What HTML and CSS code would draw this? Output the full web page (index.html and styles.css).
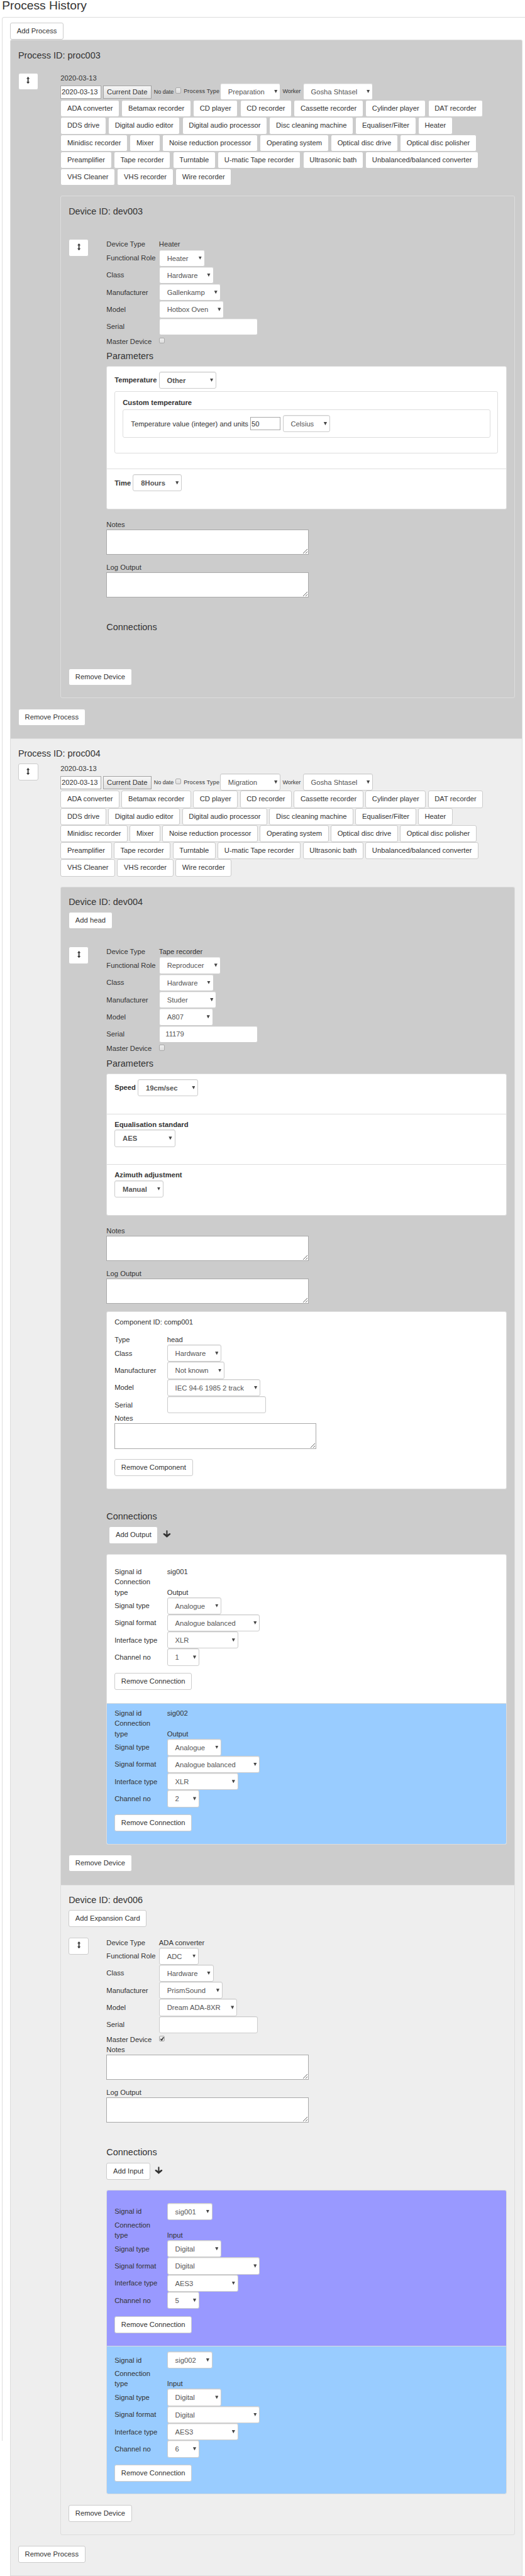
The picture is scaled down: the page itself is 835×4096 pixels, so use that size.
FILE: index.html
```html
<!DOCTYPE html>
<html lang="en">
<head>
<meta charset="utf-8">
<title>Process History</title>
<link rel="stylesheet" href="styles.css">
</head>
<body>
<svg class="defs" aria-hidden="true">
  <symbol id="updown" viewBox="0 0 14 14"><path d="M7 0l3.2 3.9H8.1v6.2h2.1L7 14l-3.2-3.9h2.1V3.9H3.8z"/></symbol>
  <symbol id="down" viewBox="0 0 14 14"><path d="M5.8 1.2Q5.8.2 7 .2t1.2 1v6.9l3.5-2.2q1.4-.5 2 .5.4.9-.3 1.6L7 13.8.6 8q-.7-.7-.3-1.6.6-1 2-.5l3.5 2.2z"/></symbol>
</svg>
<h1 class="title">Process History</h1>
<main class="history">
  <button class="btn">Add Process</button>

  <section class="process dark first">
    <h2 class="heading">Process ID: proc003</h2>
    <div class="process-row">
      <button class="btn move"><svg><use href="#updown"/></svg></button>
      <div class="process-body">
        <p class="text">2020-03-13</p>
        <div class="date-row">
          <input class="date" value="2020-03-13"><button class="native">Current Date</button>
          <small class="no-date">No date</small><i class="check"></i><small class="ptype">Process Type</small>
          <span class="select w120">Preparation</span><small class="worker">Worker</small><span class="select w139">Gosha Shtasel</span>
        </div>
        <div class="types">
          <button class="btn">ADA converter</button><button class="btn">Betamax recorder</button><button class="btn">CD player</button><button class="btn">CD recorder</button><button class="btn">Cassette recorder</button><button class="btn">Cylinder player</button><button class="btn">DAT recorder</button><button class="btn">DDS drive</button><button class="btn">Digital audio editor</button><button class="btn">Digital audio processor</button><button class="btn">Disc cleaning machine</button><button class="btn">Equaliser/Filter</button><button class="btn">Heater</button><button class="btn">Minidisc recorder</button><button class="btn">Mixer</button><button class="btn">Noise reduction processor</button><button class="btn">Operating system</button><button class="btn">Optical disc drive</button><button class="btn">Optical disc polisher</button><button class="btn">Preamplifier</button><button class="btn">Tape recorder</button><button class="btn">Turntable</button><button class="btn">U-matic Tape recorder</button><button class="btn">Ultrasonic bath</button><button class="btn">Unbalanced/balanced converter</button><button class="btn">VHS Cleaner</button><button class="btn">VHS recorder</button><button class="btn">Wire recorder</button>
        </div>
        <section class="device dev003">
          <h2 class="heading">Device ID: dev003</h2>
          <div class="device-row">
            <button class="btn move"><svg><use href="#updown"/></svg></button>
            <div class="device-body">
              <div class="field plain"><label>Device Type</label><span>Heater</span></div>
              <div class="field"><label>Functional Role</label><span class="select w91">Heater</span></div>
              <div class="field"><label>Class</label><span class="select w108">Hardware</span></div>
              <div class="field"><label>Manufacturer</label><span class="select w122">Gallenkamp</span></div>
              <div class="field"><label>Model</label><span class="select w129">Hotbox Oven</span></div>
              <div class="field"><label>Serial</label><input class="serial" value=""></div>
              <div class="field master"><label>Master Device</label><i class="check"></i></div>
              <h2 class="heading">Parameters</h2>
              <div class="list">
                <div class="item temp">
                  <div class="param"><b>Temperature</b><span class="select bold w114">Other</span></div>
                  <div class="custom">
                    <b>Custom temperature</b>
                    <div class="units"><span>Temperature value (integer) and units</span><input class="num" value="50"><span class="select w94">Celsius</span></div>
                  </div>
                </div>
                <div class="item time"><div class="param"><b>Time</b><span class="select bold w97">8Hours</span></div></div>
              </div>
              <div class="area gap-20"><label>Notes</label><textarea></textarea></div>
              <div class="area gap-15"><label>Log Output</label><textarea></textarea></div>
              <h2 class="heading connections">Connections</h2>
            </div>
          </div>
          <button class="btn remove-device">Remove Device</button>
        </section>
      </div>
    </div>
    <button class="btn remove-process">Remove Process</button>
  </section>

  <section class="process light second">
    <h2 class="heading">Process ID: proc004</h2>
    <div class="process-row">
      <button class="btn move"><svg><use href="#updown"/></svg></button>
      <div class="process-body">
        <p class="text">2020-03-13</p>
        <div class="date-row">
          <input class="date" value="2020-03-13"><button class="native">Current Date</button>
          <small class="no-date">No date</small><i class="check"></i><small class="ptype">Process Type</small>
          <span class="select w120">Migration</span><small class="worker">Worker</small><span class="select w139">Gosha Shtasel</span>
        </div>
        <div class="types">
          <button class="btn">ADA converter</button><button class="btn">Betamax recorder</button><button class="btn">CD player</button><button class="btn">CD recorder</button><button class="btn">Cassette recorder</button><button class="btn">Cylinder player</button><button class="btn">DAT recorder</button><button class="btn">DDS drive</button><button class="btn">Digital audio editor</button><button class="btn">Digital audio processor</button><button class="btn">Disc cleaning machine</button><button class="btn">Equaliser/Filter</button><button class="btn">Heater</button><button class="btn">Minidisc recorder</button><button class="btn">Mixer</button><button class="btn">Noise reduction processor</button><button class="btn">Operating system</button><button class="btn">Optical disc drive</button><button class="btn">Optical disc polisher</button><button class="btn">Preamplifier</button><button class="btn">Tape recorder</button><button class="btn">Turntable</button><button class="btn">U-matic Tape recorder</button><button class="btn">Ultrasonic bath</button><button class="btn">Unbalanced/balanced converter</button><button class="btn">VHS Cleaner</button><button class="btn">VHS recorder</button><button class="btn">Wire recorder</button>
        </div>
        <section class="device dark dev004">
          <h2 class="heading">Device ID: dev004</h2>
          <button class="btn add-part">Add head</button>
          <div class="device-row">
            <button class="btn move"><svg><use href="#updown"/></svg></button>
            <div class="device-body">
              <div class="field plain"><label>Device Type</label><span>Tape recorder</span></div>
              <div class="field"><label>Functional Role</label><span class="select w122">Reproducer</span></div>
              <div class="field"><label>Class</label><span class="select w108">Hardware</span></div>
              <div class="field"><label>Manufacturer</label><span class="select w114">Studer</span></div>
              <div class="field"><label>Model</label><span class="select w107">A807</span></div>
              <div class="field"><label>Serial</label><input class="serial" value="11179"></div>
              <div class="field master"><label>Master Device</label><i class="check"></i></div>
              <h2 class="heading">Parameters</h2>
              <div class="list">
                <div class="item speed"><div class="param"><b>Speed</b><span class="select bold w120">19cm/sec</span></div></div>
                <div class="item stacked"><b>Equalisation standard</b><span class="select bold w120">AES</span></div>
                <div class="item stacked"><b>Azimuth adjustment</b><span class="select bold w97">Manual</span></div>
              </div>
              <div class="area gap-20"><label>Notes</label><textarea></textarea></div>
              <div class="area gap-15"><label>Log Output</label><textarea></textarea></div>
              <div class="list component">
                <p class="text">Component ID: comp001</p>
                <div class="field plain type"><label>Type</label><span>head</span></div>
                <div class="field"><label>Class</label><span class="select w108">Hardware</span></div>
                <div class="field"><label>Manufacturer</label><span class="select w114">Not known</span></div>
                <div class="field"><label>Model</label><span class="select w185">IEC 94-6 1985 2 track</span></div>
                <div class="field"><label>Serial</label><input class="serial" value=""></div>
                <div class="area"><label>Notes</label><textarea></textarea></div>
                <button class="btn remove-part">Remove Component</button>
              </div>
              <h2 class="heading connections">Connections</h2>
              <div class="add-row output"><button class="btn">Add Output</button><svg><use href="#down"/></svg></div>
              <div class="list">
                <div class="item connection lead">
                  <div class="field plain"><label>Signal id</label><span>sig001</span></div>
                  <div class="field double"><label>Connection type</label><span>Output</span></div>
                  <div class="field"><label>Signal type</label><span class="select w108">Analogue</span></div>
                  <div class="field"><label>Signal format</label><span class="select w184">Analogue balanced</span></div>
                  <div class="field"><label>Interface type</label><span class="select w141">XLR</span></div>
                  <div class="field"><label>Channel no</label><span class="select w64">1</span></div>
                  <button class="btn">Remove Connection</button>
                </div>
                <div class="item connection blue">
                  <div class="field plain"><label>Signal id</label><span>sig002</span></div>
                  <div class="field double"><label>Connection type</label><span>Output</span></div>
                  <div class="field"><label>Signal type</label><span class="select w108">Analogue</span></div>
                  <div class="field"><label>Signal format</label><span class="select w184">Analogue balanced</span></div>
                  <div class="field"><label>Interface type</label><span class="select w141">XLR</span></div>
                  <div class="field"><label>Channel no</label><span class="select w64">2</span></div>
                  <button class="btn">Remove Connection</button>
                </div>
              </div>
            </div>
          </div>
          <button class="btn remove-device">Remove Device</button>
        </section>
        <section class="device light dev006">
          <h2 class="heading">Device ID: dev006</h2>
          <button class="btn add-part">Add Expansion Card</button>
          <div class="device-row">
            <button class="btn move"><svg><use href="#updown"/></svg></button>
            <div class="device-body">
              <div class="field plain"><label>Device Type</label><span>ADA converter</span></div>
              <div class="field"><label>Functional Role</label><span class="select w79">ADC</span></div>
              <div class="field"><label>Class</label><span class="select w108">Hardware</span></div>
              <div class="field"><label>Manufacturer</label><span class="select w126">PrismSound</span></div>
              <div class="field"><label>Model</label><span class="select w155">Dream ADA-8XR</span></div>
              <div class="field"><label>Serial</label><input class="serial" value=""></div>
              <div class="field master"><label>Master Device</label><i class="check"><svg viewBox="0 0 12 12"><path d="M2.2 6.2l2.8 3.3L9.8 2"/></svg></i></div>
              <div class="area"><label>Notes</label><textarea></textarea></div>
              <div class="area gap-15"><label>Log Output</label><textarea></textarea></div>
              <h2 class="heading connections">Connections</h2>
              <div class="add-row"><button class="btn">Add Input</button><svg><use href="#down"/></svg></div>
              <div class="list">
                <div class="item connection violet">
                  <div class="field"><label>Signal id</label><span class="select w90">sig001</span></div>
                  <div class="field double"><label>Connection type</label><span>Input</span></div>
                  <div class="field"><label>Signal type</label><span class="select w108">Digital</span></div>
                  <div class="field"><label>Signal format</label><span class="select w184">Digital</span></div>
                  <div class="field"><label>Interface type</label><span class="select w141">AES3</span></div>
                  <div class="field"><label>Channel no</label><span class="select w64">5</span></div>
                  <button class="btn">Remove Connection</button>
                </div>
                <div class="item connection blue input">
                  <div class="field"><label>Signal id</label><span class="select w90">sig002</span></div>
                  <div class="field double"><label>Connection type</label><span>Input</span></div>
                  <div class="field"><label>Signal type</label><span class="select w108">Digital</span></div>
                  <div class="field"><label>Signal format</label><span class="select w184">Digital</span></div>
                  <div class="field"><label>Interface type</label><span class="select w141">AES3</span></div>
                  <div class="field"><label>Channel no</label><span class="select w64">6</span></div>
                  <button class="btn">Remove Connection</button>
                </div>
              </div>
            </div>
          </div>
          <button class="btn remove-device">Remove Device</button>
        </section>
      </div>
    </div>
    <button class="btn remove-process">Remove Process</button>
  </section>
  <section class="process dark last"></section>
</main>
</body>
</html>
```
FILE: styles.css
```css
/* 1rem stands for ten design pixels */
html { font-size: 8.0288px; overflow: hidden; }
*, *::before, *::after { box-sizing: border-box; }
body {
  margin: 0; height: 4096px; overflow: hidden; background: #fff; color: #333;
  font-family: "Liberation Sans", Arial, sans-serif; font-size: 1.4rem; line-height: 2rem;
}
button, input, textarea { font: inherit; color: inherit; }
.defs { display: none; }
.text { margin: 0; height: 2rem; }
.title { margin: 0; height: 3.4rem; padding-left: .4rem; font-size: 2.4rem; font-weight: 400; line-height: 2.3rem; }

.history {
  width: 104.7rem; height: 480rem; margin-left: .4rem; padding: calc(1.1rem - 1px) 1.5rem 0 calc(1.6rem - 1px);
  border: 1px solid #ddd; border-bottom: 0; border-radius: 4px 4px 0 0;
}

.btn {
  display: block; height: 3.4rem; padding: 0 1.2rem; border: 1px solid #ccc; border-radius: 3px;
  background: #fff; line-height: 1; white-space: nowrap; text-align: center;
}
.heading { margin: 0; height: 2rem; font-size: 1.8rem; font-weight: 400; line-height: 2rem; }

/* processes */
.process { width: 101.5rem; padding: 1.9rem 1.5rem 0 calc(1.6rem - 1px); border: 1px solid #ddd; border-bottom: 0; }
.dark { background: #ccc; }
.light { background: #eee; }
.first { height: 138.3rem; padding-top: calc(2.1rem - 1px); border-radius: 3px 3px 0 0; }
.second { height: 363.8rem; padding-top: calc(2rem - 1px); }
.last { height: 10rem; }
.process-row { display: flex; margin-top: 1rem; }
.first > .process-row { margin-top: 2.4rem; }
.process-body { width: 90rem; margin-left: 4.4rem; }
.move { width: 4rem; padding: 0; flex: none; display: flex; align-items: center; justify-content: center; }
.move svg { width: 1.4rem; height: 1.4rem; margin-top: -.3rem; }

.date-row { display: flex; align-items: center; height: 3.4rem; }
.date { width: 8rem; height: 2.6rem; padding: 0 .1rem; margin: .2rem .4rem 0 0; border: 1px solid #a9a9a9; }
.native { width: 9.6rem; height: 2.6rem; padding: 0; margin: .2rem .5rem 0 0; border: 1px solid #a2a2a2; background: linear-gradient(#f6f6f6, #e0e0e0); white-space: nowrap; }
small { font-size: 1.12rem; white-space: nowrap; }
.no-date { width: 4.2rem; margin-top: .2rem; }
.check {
  position: relative; display: block; width: 1.2rem; height: 1.2rem; margin-bottom: .3rem; border: 1px solid #aaa;
  border-radius: 2px; background: linear-gradient(#eee, #dcdcdc); flex: none;
}
.check svg { display: block; width: 100%; height: 100%; fill: none; stroke: #333; stroke-width: 2.4; }
.ptype { width: 7.2rem; margin-left: .5rem; letter-spacing: .03rem; }
.worker { width: 4rem; margin-left: .4rem; }

.types { display: flex; flex-wrap: wrap; column-gap: .41rem; height: 17rem; }

/* form controls */
.select {
  position: relative; display: block; height: 3.4rem; padding-left: calc(1.6rem - 1px); border: 1px solid #ccc; border-radius: 3px;
  background: #fff; box-shadow: inset 0 1px 1px rgba(0,0,0,.075); color: #555; line-height: 3.3rem; white-space: nowrap; flex: none;
}
.select.bold { font-weight: 700; }
.select::after {
  content: ""; position: absolute; right: .5rem; top: 1.25rem; width: .65rem; height: .65rem;
  background: #444; clip-path: polygon(0 0, 100% 0, 50% 100%);
}
.serial {
  width: 19.6rem; height: 3.4rem; padding: 0 calc(1.3rem - 1px); border: 1px solid #ccc; border-radius: 3px;
  background: #fff; box-shadow: inset 0 1px 1px rgba(0,0,0,.075); color: #555;
}
.w64 { width: 6.4rem; } .w79 { width: 7.9rem; } .w90 { width: 9rem; } .w91 { width: 9.1rem; } .w94 { width: 9.4rem; }
.w97 { width: 9.7rem; } .w107 { width: 10.7rem; } .w108 { width: 10.8rem; } .w114 { width: 11.4rem; } .w120 { width: 12rem; }
.w122 { width: 12.2rem; } .w126 { width: 12.6rem; } .w129 { width: 12.9rem; } .w139 { width: 13.9rem; } .w141 { width: 14.1rem; }
.w155 { width: 15.5rem; } .w184 { width: 18.4rem; } .w185 { width: 18.5rem; }

.field { display: flex; align-items: center; height: 3.4rem; }
.field label { width: 10.4rem; padding-right: .5rem; flex: none; white-space: nowrap; }
.field.plain { height: 2rem; }
.field.double { height: 4rem; align-items: flex-end; }
.field.double label { white-space: normal; }
.field.master { height: 2.2rem; padding-top: .2rem; }
.area label { display: block; height: 2rem; }
textarea { display: block; width: 40rem; height: 5rem; border: 1px solid #a9a9a9; background: #fff; }
.gap-20 { margin-top: 2rem; }
.gap-15 { margin-top: 1.5rem; }

/* devices */
.device { width: 90rem; padding: calc(2rem - 1px) 1.5rem 0 calc(1.6rem - 1px); border: 1px solid #ddd; }
.device-row { display: flex; }
.device-body { width: 79.3rem; margin-left: 3.5rem; flex: none; }
.dev003 { height: 99.5rem; margin-top: 2rem; border-radius: 3px; }
.dev003 .device-row { height: 85rem; margin-top: 4.6rem; }
.dev004 { height: 197.7rem; margin-top: 2rem; border-bottom: 0; border-radius: 3px 3px 0 0; }
.dev004 .device-row { height: 179.8rem; margin-top: 3.5rem; }
.dev006 { height: 128.8rem; border-radius: 0 0 3px 3px; }
.dev006 .device-row { height: 112.4rem; margin-top: 2rem; }
.add-part { margin-top: 1rem; }
.remove-process { margin-top: 2.1rem; }

.device-body > .heading { margin-top: .9rem; }
.list { width: 79.3rem; margin-top: 1rem; border: 1px solid #ddd; border-radius: 3px; background: #fff; overflow: hidden; }
.item { padding-left: calc(1.6rem - 1px); }
.item + .item { border-top: 1px solid #ddd; }
.item b { display: block; height: 2rem; }
.param { display: flex; align-items: center; gap: .4rem; }
.temp { height: 20.2rem; padding-top: calc(1.1rem - 1px); }
.custom { width: 76rem; height: 12.3rem; margin-top: .5rem; padding: 1.1rem 1.5rem; border: 1px solid #ddd; border-radius: 3px; }
.units {
  display: flex; align-items: center; gap: .4rem; width: 72.8rem; height: 5.6rem; margin-top: .4rem; padding-left: 1.5rem;
  border: 1px solid #ddd; border-radius: 3px;
}
.num { width: 6rem; height: 2.6rem; padding: 0 .1rem; border: 1px solid #a9a9a9; }
.time { height: 7.9rem; padding-top: 1rem; }
.speed { height: 7.9rem; padding-top: 1rem; }
.stacked { height: 10rem; padding-top: 1rem; }

.component { height: 35.2rem; margin-top: 1.5rem; padding: calc(1.1rem - 1px) 0 0 calc(1.6rem - 1px); }
.component .type { margin-top: 1.5rem; }
.remove-part { margin-top: 2rem; }
.device-body > .connections { margin-top: 4.4rem; }
.dev003 .device-body > .connections, .dev006 .device-body > .connections { margin-top: 4.9rem; }
.add-row { display: flex; align-items: center; height: 3.4rem; margin-top: 1rem; }
.add-row + .list { margin-top: 2rem; }
.add-row.output { padding-left: .5rem; }
.add-row svg { width: 1.6rem; height: 1.5rem; margin: 0 0 .4rem .9rem; }
svg { fill: #333; }

.connection { height: 28rem; padding-top: calc(1.1rem - 1px); }
.connection > .btn { margin-top: 1.4rem; }
.connection.lead { height: 29.4rem; padding-top: calc(2.6rem - 1px); }
.connection.violet { height: 30.8rem; padding-top: calc(2.6rem - 1px); background: #99f; }
.connection.blue { background: #9cf; }
.connection.input { height: 29.3rem; }
```
